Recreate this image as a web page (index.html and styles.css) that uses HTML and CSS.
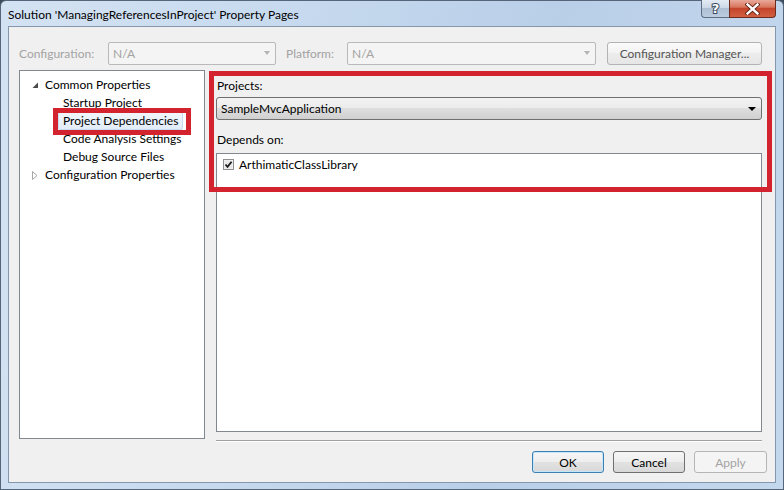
FILE: index.html
```html
<!DOCTYPE html>
<html lang="en">
<head>
<meta charset="utf-8">
<title>Property Pages</title>
<link rel="stylesheet" href="styles.css">
</head>
<body>
<div class="window">
  <div class="titlebar">
    <span class="title">Solution 'ManagingReferencesInProject' Property Pages</span>
    <div class="caption-buttons">
      <div class="cap-btn help"><span>?</span></div>
      <div class="cap-btn close">
        <svg width="15" height="12" viewBox="0 0 15 12">
          <path d="M2.5 1.5 L12.5 10.5 M12.5 1.5 L2.5 10.5" stroke="#5a1c12" stroke-width="4.2" stroke-linecap="square"/>
          <path d="M2.5 1.5 L12.5 10.5 M12.5 1.5 L2.5 10.5" stroke="#ffffff" stroke-width="2.4" stroke-linecap="square"/>
        </svg>
      </div>
    </div>
  </div>

  <div class="client">
    <div class="config-row">
      <span class="lbl lbl-config">Configuration:</span>
      <div class="combo combo-disabled combo-config"><span>N/A</span><i class="arrow-dim"></i></div>
      <span class="lbl lbl-platform">Platform:</span>
      <div class="combo combo-disabled combo-platform"><span>N/A</span><i class="arrow-dim"></i></div>
      <div class="btn btn-config">Configuration Manager...</div>
    </div>

    <div class="main-row">
      <div class="tree">
        <div class="tree-row">
          <span class="twisty">
            <svg width="7" height="7" viewBox="0 0 7 7"><path d="M6 0.5 L6 6 L0.5 6 Z" fill="#4b4b4b"/></svg>
          </span>
          <span class="node">Common Properties</span>
        </div>
        <div class="tree-row child"><span class="node">Startup Project</span></div>
        <div class="tree-row child"><span class="node selected">Project Dependencies</span></div>
        <div class="tree-row child"><span class="node">Code Analysis Settings</span></div>
        <div class="tree-row child"><span class="node">Debug Source Files</span></div>
        <div class="tree-row">
          <span class="twisty">
            <svg width="6" height="9" viewBox="0 0 6 9"><path d="M0.5 0.5 L5 4.5 L0.5 8.5 Z" fill="#ffffff" stroke="#a6a6a6" stroke-width="1"/></svg>
          </span>
          <span class="node">Configuration Properties</span>
        </div>
      </div>

      <div class="page">
        <div class="page-label">Projects:</div>
        <div class="combo combo-projects"><span>SampleMvcApplication</span><i class="arrow-solid"></i></div>
        <div class="page-label depends">Depends on:</div>
        <div class="listbox">
          <div class="list-row">
            <svg class="check" width="11" height="11" viewBox="0 0 11 11">
              <rect x="0.5" y="0.5" width="10" height="10" fill="#f4f4f4" stroke="#8f8f8f"/>
              <rect x="1.5" y="1.5" width="8" height="8" fill="#e9e9e9"/>
              <path d="M2.5 5.5 L4.5 7.8 L8.6 2.8" fill="none" stroke="#1c1c1c" stroke-width="1.8"/>
            </svg>
            <span>ArthimaticClassLibrary</span>
          </div>
        </div>
        <div class="separator"></div>
      </div>
    </div>

    <div class="button-row">
      <div class="btn btn-dialog btn-default">OK</div>
      <div class="btn btn-dialog">Cancel</div>
      <div class="btn btn-dialog btn-disabled">Apply</div>
    </div>
  </div>

  <div class="callout callout-tree"></div>
  <div class="callout callout-page"></div>
</div>
</body>
</html>
```

FILE: styles.css
```css
html, body {
  margin: 0;
  padding: 0;
}

body {
  width: 784px;
  height: 490px;
  overflow: hidden;
  background: #3b4a5c;
  font-family: Lato, "Open Sans", sans-serif;
  font-size: 12px;
  color: #000;
}

/* Aero window frame */
.window {
  position: relative;
  width: 784px;
  height: 490px;
  box-sizing: border-box;
  border: 1px solid #56667a;
  border-radius: 6px 6px 0 0;
  padding: 0 7px 6px 7px;
  display: flex;
  flex-direction: column;
  background: linear-gradient(100deg, #d4e3f3 0%, #c6d9ee 35%, #b9cfe8 65%, #c4d8ed 100%);
}

.titlebar {
  height: 25px;
  display: flex;
  align-items: flex-start;
  flex-shrink: 0;
}

.title {
  line-height: 16px;
  padding-top: 6px;
  font-size: 12px;
  color: #000;
}

.caption-buttons {
  margin-left: auto;
  margin-top: -1px;
  display: flex;
}

.cap-btn {
  height: 18px;
  box-sizing: border-box;
  display: flex;
  align-items: center;
  justify-content: center;
}

.help {
  width: 28px;
  border: 1px solid #5d6e84;
  border-top: none;
  border-right: none;
  border-radius: 0 0 0 4px;
  background: linear-gradient(#e3ebf4 0%, #cdd9e7 45%, #aebfd3 50%, #bccde0 100%);
}

.help span {
  font-family: "DejaVu Sans", sans-serif;
  font-weight: bold;
  font-size: 13px;
  color: #fff;
  line-height: 15px;
  -webkit-text-stroke: 2px #3a4a5e;
  paint-order: stroke fill;
}

.close {
  width: 47px;
  border: 1px solid #6e2a1c;
  border-top: none;
  border-radius: 0 0 4px 0;
  background: linear-gradient(#e9a99a 0%, #d8755d 42%, #c4452c 50%, #d25f42 100%);
}

/* Dialog client area */
.client {
  flex: 1;
  box-sizing: border-box;
  border: 1px solid #8497ad;
  background: #f0f0f0;
  padding: 14px 13px 0 10px;
  display: flex;
  flex-direction: column;
}

.config-row {
  height: 24px;
  display: flex;
  align-items: center;
}

.lbl {
  color: #a3a3a3;
  white-space: nowrap;
}

.lbl-config {
  width: 89px;
}

.lbl-platform {
  width: 61px;
  margin-left: 10px;
}

.combo {
  height: 23px;
  box-sizing: border-box;
  display: flex;
  align-items: center;
  padding-left: 4px;
}

.combo-disabled {
  border: 1px solid #b9b9b9;
  border-radius: 2px;
  background: #f4f4f4;
  color: #a3a3a3;
}

.combo-config {
  width: 168px;
}

.combo-platform {
  width: 249px;
}

.arrow-dim {
  margin-left: auto;
  margin-right: 5px;
  width: 0;
  height: 0;
  border-left: 3.5px solid transparent;
  border-right: 3.5px solid transparent;
  border-top: 4px solid #b4b4b4;
}

.btn {
  box-sizing: border-box;
  display: flex;
  align-items: center;
  justify-content: center;
  border: 1px solid #9a9a9a;
  border-radius: 3px;
  background: linear-gradient(#f6f6f6 0%, #eeeeee 49%, #e2e2e2 50%, #d8d8d8 100%);
  white-space: nowrap;
}

.btn-config {
  width: 155px;
  height: 23px;
  margin-left: 11px;
  color: #555;
  border-color: #b3b3b3;
  background: linear-gradient(#fafafa 0%, #f3f3f3 49%, #ececec 50%, #e6e6e6 100%);
}

.main-row {
  margin-top: 5px;
  display: flex;
  align-items: flex-start;
  gap: 11px;
}

/* Property tree */
.tree {
  width: 186px;
  height: 369px;
  box-sizing: border-box;
  border: 1px solid #828790;
  background: #fff;
  padding-top: 5px;
}

.tree-row {
  height: 18px;
  display: flex;
  align-items: center;
  padding-left: 12px;
  white-space: nowrap;
}

.tree-row.child {
  padding-left: 38px;
}

.twisty {
  width: 13px;
  display: flex;
  align-items: center;
}

.node {
  padding: 0 4px;
  line-height: 16px;
  border: 1px solid transparent;
  border-radius: 2px;
}

.tree-row:not(.child) .node {
  padding: 0;
  border: none;
}

.node.selected {
  border-color: #c7dcf1;
  background: linear-gradient(#f1f6fc, #e2ecf8);
}

/* Property page */
.page {
  width: 546px;
  padding-top: 8px;
}

.page-label {
  line-height: 16px;
  padding-left: 1px;
}

.page-label.depends {
  margin-top: 12px;
}

.combo-projects {
  margin-top: 3px;
  border: 1px solid #707070;
  border-radius: 3px;
  background: linear-gradient(#f3f3f3 0%, #ebebeb 49%, #dedede 50%, #d0d0d0 100%);
}

.arrow-solid {
  margin-left: auto;
  margin-right: 5px;
  width: 0;
  height: 0;
  border-left: 4px solid transparent;
  border-right: 4px solid transparent;
  border-top: 4px solid #000;
}

.listbox {
  margin-top: 5px;
  height: 279px;
  box-sizing: border-box;
  border: 1px solid #828790;
  background: #fff;
  padding: 1px 0 0 6px;
}

.list-row {
  height: 18px;
  display: flex;
  align-items: center;
}

.check {
  margin-right: 5px;
}

.separator {
  margin-top: 8px;
  border-top: 1px solid #a0a0a0;
  border-bottom: 1px solid #fff;
}

.button-row {
  margin-top: 9px;
  margin-right: -5px;
  display: flex;
  justify-content: flex-end;
  gap: 9px;
}

.btn-dialog {
  width: 72px;
  height: 22px;
  border-color: #707070;
}

.btn-default {
  border-color: #3c7fb1;
  box-shadow: inset 0 0 0 1px #c4e6fa;
}

.btn-disabled {
  width: 73px;
  border-color: #b5b5b5;
  background: #f4f4f4;
  color: #a3a3a3;
}

/* Red highlight frames drawn over the dialog */
.callout {
  position: absolute;
  box-sizing: border-box;
  border: 5px solid #d2232e;
}

.callout-tree {
  left: 52px;
  top: 107px;
  width: 138px;
  height: 27px;
}

.callout-page {
  left: 208px;
  top: 70px;
  width: 563px;
  height: 121px;
}
```
